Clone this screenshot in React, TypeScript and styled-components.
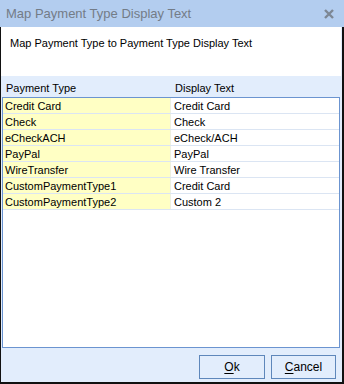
import React from "react";
import styled, { createGlobalStyle } from "styled-components";

const GlobalStyle = createGlobalStyle`
  html, body {
    margin: 0;
    padding: 0;
    background: #ffffff;
  }
  body {
    font-family: "Liberation Sans", "DejaVu Sans", sans-serif;
    font-size: 11px;
    color: #000;
  }
`;

const Window = styled.div`
  box-sizing: border-box;
  width: 344px;
  height: 384px;
  display: flex;
  flex-direction: column;
  background: #e2edfc;
`;

const TitleBar = styled.div`
  height: 27px;
  flex: none;
  display: flex;
  align-items: center;
  justify-content: space-between;
  padding: 0 10px 0 6px;
  background: #b3cdef;
  color: #737c87;
  font-size: 13px;
`;

const CloseGlyph = styled.svg`
  width: 10px;
  height: 10px;
`;

const Body = styled.div`
  flex: 1;
  display: flex;
  flex-direction: column;
  border-left: 1px solid #111;
  border-right: 2px solid #111;
  border-bottom: 2px solid #111;
  min-height: 0;
`;

const Description = styled.div`
  height: 49px;
  flex: none;
  background: #ffffff;
  margin-right: 1px;
  padding: 10px 0 0 9px;
  box-sizing: border-box;
  font-size: 11px;
`;

const Panel = styled.div`
  flex: 1;
  display: flex;
  flex-direction: column;
  padding: 0 2px 0 1px;
  min-height: 0;
`;

const HeaderRow = styled.div`
  height: 21px;
  flex: none;
  display: grid;
  grid-template-columns: 169px 1fr;
  align-items: end;
  padding: 0 0 3px 1px;
  box-sizing: border-box;
`;

const HeaderCell = styled.div`
  padding-left: 3px;
`;

const Grid = styled.div`
  height: 251px;
  flex: none;
  box-sizing: border-box;
  border: 1px solid #6b94d0;
  background: #ffffff;
  overflow: hidden;
`;

const Row = styled.div`
  display: grid;
  grid-template-columns: 168px 1fr;
  height: 16px;
  box-sizing: border-box;
  border-bottom: 1px solid #dbe5f3;
`;

const Cell = styled.div<{ $key?: boolean }>`
  display: flex;
  align-items: center;
  padding-left: ${(p) => (p.$key ? "2px" : "3px")};
  background: ${(p) => (p.$key ? "#ffffc4" : "#ffffff")};
  border-right: ${(p) => (p.$key ? "1px solid #eef0e0" : "none")};
  white-space: nowrap;
  overflow: hidden;
`;

const Footer = styled.div`
  flex: 1;
  display: flex;
  justify-content: flex-end;
  align-items: flex-start;
  gap: 6px;
  padding: 7px 4px 0 0;
`;

const Button = styled.button<{ $w: number }>`
  width: ${(p) => p.$w}px;
  height: 24px;
  box-sizing: border-box;
  border: 1px solid #5e87bb;
  background: #e2edfc;
  font-family: "Liberation Sans", "DejaVu Sans", sans-serif;
  font-size: 12px;
  color: #000;
  padding: 0;
  u {
    text-underline-offset: 2px;
  }
`;

const rows: [string, string][] = [
  ["Credit Card", "Credit Card"],
  ["Check", "Check"],
  ["eCheckACH", "eCheck/ACH"],
  ["PayPal", "PayPal"],
  ["WireTransfer", "Wire Transfer"],
  ["CustomPaymentType1", "Credit Card"],
  ["CustomPaymentType2", "Custom 2"],
];

export default function App() {
  return (
    <>
      <GlobalStyle />
      <Window>
        <TitleBar>
          <span>Map Payment Type Display Text</span>
          <CloseGlyph viewBox="0 0 10 10">
            <path d="M1 1 L9 9 M9 1 L1 9" stroke="#7d8794" strokeWidth="2.4" />
          </CloseGlyph>
        </TitleBar>
        <Body>
          <Description>Map Payment Type to Payment Type Display Text</Description>
          <Panel>
            <HeaderRow>
              <HeaderCell>Payment Type</HeaderCell>
              <HeaderCell>Display Text</HeaderCell>
            </HeaderRow>
            <Grid>
              {rows.map(([k, v]) => (
                <Row key={k}>
                  <Cell $key>{k}</Cell>
                  <Cell>{v}</Cell>
                </Row>
              ))}
            </Grid>
            <Footer>
              <Button $w={66}>
                <u>O</u>k
              </Button>
              <Button $w={65}>
                <u>C</u>ancel
              </Button>
            </Footer>
          </Panel>
        </Body>
      </Window>
    </>
  );
}
